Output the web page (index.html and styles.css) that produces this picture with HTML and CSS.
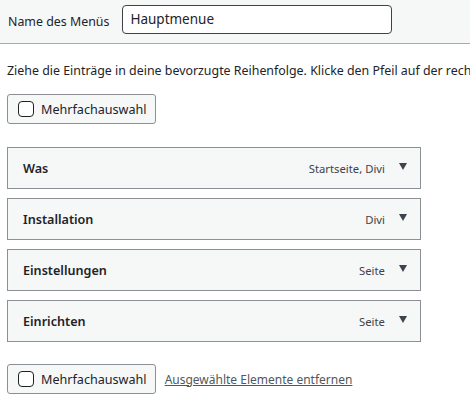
FILE: index.html
```html
<!DOCTYPE html>
<html lang="de">
<head>
    <meta charset="UTF-8">
    <title>Menüs</title>
    <link rel="stylesheet" href="styles.css">
</head>
<body>
    <div class="kopf">
        <label for="menuName">Name des Menüs</label>
        <input id="menuName" type="text" value="Hauptmenue">
    </div>

    <div class="inhalt">
        <p class="hinweis">Ziehe die Einträge in deine bevorzugte Reihenfolge. Klicke den Pfeil auf der rechten Seite des Eintrags, um weitere Einstellungen anzuzeigen.</p>

        <button class="auswahl"><span class="box"></span>Mehrfachauswahl</button>

        <ul class="eintraege">
            <li><b>Was</b><span class="typ">Startseite, Divi</span><span class="pfeil"></span></li>
            <li><b>Installation</b><span class="typ">Divi</span><span class="pfeil"></span></li>
            <li><b>Einstellungen</b><span class="typ">Seite</span><span class="pfeil"></span></li>
            <li><b>Einrichten</b><span class="typ">Seite</span><span class="pfeil"></span></li>
        </ul>

        <div class="unten">
            <button class="auswahl"><span class="box"></span>Mehrfachauswahl</button>
            <a href="#">Ausgewählte Elemente entfernen</a>
        </div>
    </div>
</body>
</html>
```

FILE: styles.css
```css
body {
    margin: 0;
    font-family: "Noto Sans", "Open Sans", sans-serif;
    font-size: 12.4px;
    color: #1d2327;
    background: #fff;
    overflow: hidden;
}
.kopf {
    display: flex;
    align-items: center;
    gap: 13px;
    height: 43px;
    padding: 0 8px;
    background: #f6f7f7;
    border-bottom: 1px solid #a7aaad;
}
.kopf input {
    width: 254px;
    height: 27px;
    padding: 0 7px;
    border: 1px solid #3c434a;
    border-radius: 4px;
    font-family: inherit;
    font-size: 13.5px;
    color: #1d2327;
    margin-top: -5px;
}
.inhalt {
    padding: 0 7px;
    overflow: hidden;
}
.hinweis {
    margin: 18px 0 14px;
    white-space: nowrap;
    line-height: 18px;
}
.auswahl {
    display: flex;
    align-items: center;
    gap: 7px;
    height: 30px;
    padding: 0 8px 0 10px;
    background: #f6f7f7;
    border: 1px solid #8c8f94;
    border-radius: 3px;
    font-family: inherit;
    font-size: 12.6px;
    color: #1d2327;
}
.box {
    width: 14px;
    height: 14px;
    border: 1px solid #1d2327;
    border-radius: 4px;
    background: #fff;
}
.eintraege {
    list-style: none;
    margin: 23px 0 0;
    padding: 0;
    width: 414px;
}
.eintraege li {
    display: flex;
    align-items: center;
    height: 40px;
    margin-bottom: 9px;
    padding: 0 13px 0 15px;
    background: #f6f7f7;
    border: 1px solid #8c8f94;
}
.eintraege b {
    flex-grow: 1;
    font-weight: 600;
    font-size: 12.6px;
}
.typ {
    font-size: 11.3px;
    color: #3c434a;
}
.pfeil {
    margin-left: 14px;
    width: 0;
    height: 0;
    border-left: 4px solid transparent;
    border-right: 4px solid transparent;
    border-top: 7px solid #3c434a;
    margin-top: -3px;
}
.unten {
    display: flex;
    align-items: center;
    gap: 9px;
    margin-top: 22px;
}
.unten a {
    color: #50575e;
    text-decoration: underline;
    font-size: 12px;
}
```
